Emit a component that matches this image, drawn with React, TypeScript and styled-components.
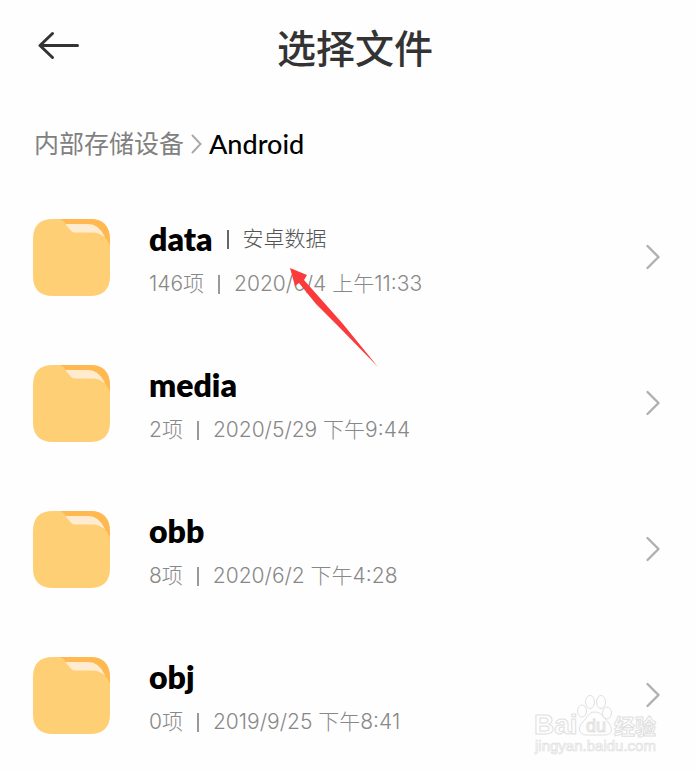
import React from "react";
import styled, { createGlobalStyle } from "styled-components";

const GlobalStyle = createGlobalStyle`
  * { box-sizing: border-box; }
  body {
    margin: 0;
    background: #fefefe;
    color: #000;
    font-family: Inter, "Noto Sans CJK SC", sans-serif;
  }
`;

const Page = styled.main`
  position: relative;
  min-height: 100vh;
  overflow: hidden;
`;

const Header = styled.header`
  display: grid;
  grid-template-columns: 48px 1fr 34px;
  align-items: center;
  height: 92px;
  padding: 0 34px;
`;

const BackButton = styled.button`
  display: flex;
  padding: 0;
  border: 0;
  background: none;
  cursor: pointer;
`;

const Title = styled.h1`
  margin: 0;
  color: #333;
  font-family: "Noto Sans CJK SC", sans-serif;
  font-size: 39px;
  font-weight: 500;
  line-height: 56px;
  text-align: center;
`;

const Breadcrumb = styled.nav`
  display: flex;
  align-items: center;
  gap: 7px;
  height: 92px;
  padding: 12px 34px 0;
  font-size: 25px;
  line-height: 36px;
`;

const CrumbLink = styled.a`
  color: #808080;
  text-decoration: none;
`;

const CurrentCrumb = styled.span`
  font-family: Lato, sans-serif;
  font-size: 27px;
  font-weight: 500;
`;

const FileList = styled.ul`
  margin: 0;
  padding: 0;
  list-style: none;
`;

const FileRow = styled.li`
  position: relative;
`;

const FileLink = styled.a`
  display: grid;
  grid-template-columns: 77px 1fr 16px;
  column-gap: 39px;
  align-items: center;
  height: 146px;
  padding: 0 35px 0 33px;
  color: inherit;
  text-decoration: none;
`;

const FileText = styled.div`
  display: flex;
  flex-direction: column;
  gap: 5px;
  padding-top: 9px;
`;

const NameLine = styled.div`
  display: flex;
  align-items: center;
  gap: 14px;
`;

const FileName = styled.span`
  font-family: Lato, sans-serif;
  font-size: 32px;
  font-weight: 800;
  line-height: 40px;
`;

const FileNote = styled.span`
  color: #555;
  font-size: 21px;
  font-weight: 300;
  line-height: 40px;
`;

const MetaLine = styled.div`
  display: flex;
  align-items: center;
  gap: 14px;
  color: #888;
  font-size: 21px;
  font-weight: 300;
  line-height: 40px;
`;

const Divider = styled.span`
  width: 2px;
  height: 19px;
  background: #999;
`;

const NoteDivider = styled(Divider)`
  background: #666;
`;

const Pointer = styled.svg`
  position: absolute;
  top: 82px;
  left: 288px;
  z-index: 1;
  pointer-events: none;
`;

const Watermark = styled.svg`
  position: absolute;
  right: 34px;
  bottom: 12px;
  pointer-events: none;
`;

const BackIcon = () => (
  <svg width="46" height="32" viewBox="0 0 46 32" fill="none" stroke="#333" strokeWidth="3" strokeLinecap="round" strokeLinejoin="round" aria-hidden="true">
    <path d="M43.500 15.500H6M18.500 3.500L6 15.500L18.500 27.500" />
  </svg>
);

const CrumbChevron = () => (
  <svg width="11" height="20" viewBox="0 0 11 20" fill="none" stroke="#aaa" strokeWidth="2" strokeLinecap="round" aria-hidden="true">
    <path d="M1.500 1.500L9.500 10L1.500 18.500" />
  </svg>
);

const RowChevron = () => (
  <svg width="16" height="26" viewBox="0 0 16 26" fill="none" stroke="#b0b0b0" strokeWidth="2.400" strokeLinecap="round" strokeLinejoin="round" aria-hidden="true">
    <path d="M2.500 2L13.500 13L2.500 24" />
  </svg>
);

const FolderIcon = () => (
  <svg width="77" height="77" viewBox="0 0 77 77" aria-hidden="true">
    <path d="M20 0H57Q77 0 77 21V57Q77 77 57 77H20Q0 77 0 57V20Q0 0 20 0Z" fill="#ffcf75" />
    <path d="M27 0H57Q77 0 77 21V27L60 10L33 6Q31 2 27 0Z" fill="#ffb950" />
    <path d="M32 5H55Q66 5 72 18L60 15L40 14Z" fill="#ffecd0" />
    <path d="M27 0Q31 1 34 8Q37 13.500 43 13.500H60Q72 14 77 27V40H20V0Z" fill="#ffcf75" />
  </svg>
);

type FileItem = { name: string; note?: string; count: string; date: string };

const files: FileItem[] = [
  { name: "data", note: "安卓数据", count: "146项", date: "2020/6/4 上午11:33" },
  { name: "media", count: "2项", date: "2020/5/29 下午9:44" },
  { name: "obb", count: "8项", date: "2020/6/2 下午4:28" },
  { name: "obj", count: "0项", date: "2019/9/25 下午8:41" },
];

export default function App() {
  return (
    <Page>
      <GlobalStyle />
      <Header>
        <BackButton type="button" aria-label="返回">
          <BackIcon />
        </BackButton>
        <Title>选择文件</Title>
      </Header>
      <Breadcrumb aria-label="路径">
        <CrumbLink href="#storage">内部存储设备</CrumbLink>
        <CrumbChevron />
        <CurrentCrumb aria-current="page">Android</CurrentCrumb>
      </Breadcrumb>
      <FileList>
        {files.map((file) => (
          <FileRow key={file.name}>
            <FileLink href={`#${file.name}`}>
              <FolderIcon />
              <FileText>
                <NameLine>
                  <FileName>{file.name}</FileName>
                  {file.note && <NoteDivider />}
                  {file.note && <FileNote>{file.note}</FileNote>}
                </NameLine>
                <MetaLine>
                  <span>{file.count}</span>
                  <Divider />
                  <span>{file.date}</span>
                </MetaLine>
              </FileText>
              <RowChevron />
            </FileLink>
            {file.note && (
              <Pointer width="92" height="104" viewBox="0 0 92 104" aria-hidden="true">
                <path d="M2 2L19 9L16 14L55 58L90 101L50 60L28 38L11 17L7 20Z" fill="#fb3b3b" />
              </Pointer>
            )}
          </FileRow>
        ))}
      </FileList>
      <Watermark width="128" height="64" viewBox="0 0 128 64" fill="#fefefe" stroke="#e0e0e0" strokeWidth="1" aria-hidden="true">
        <g fontFamily='"Liberation Sans", "Noto Sans CJK SC", sans-serif' fontWeight="700">
          <text x="0" y="40" fontSize="28">Bai</text>
          <text x="80" y="40" fontSize="21" fontFamily='"Noto Sans CJK SC", sans-serif'>经验</text>
          <text x="1" y="57" fontSize="15" strokeWidth="0.700" fontWeight="400">jingyan.baidu.com</text>
        </g>
        <ellipse cx="48" cy="17" rx="4.500" ry="6" />
        <ellipse cx="56" cy="8" rx="4.500" ry="6.500" />
        <ellipse cx="67" cy="8" rx="4.500" ry="6.500" />
        <ellipse cx="73" cy="19" rx="4.500" ry="6" />
        <path d="M61 18C54 18 53 24 49 28C43 33 45 41 52 41H71C79 41 79 33 74 28C69 24 68 18 61 18Z" />
        <text x="52" y="38" fontSize="18" fontWeight="400" fontFamily='"Liberation Sans", sans-serif'>du</text>
      </Watermark>
    </Page>
  );
}
